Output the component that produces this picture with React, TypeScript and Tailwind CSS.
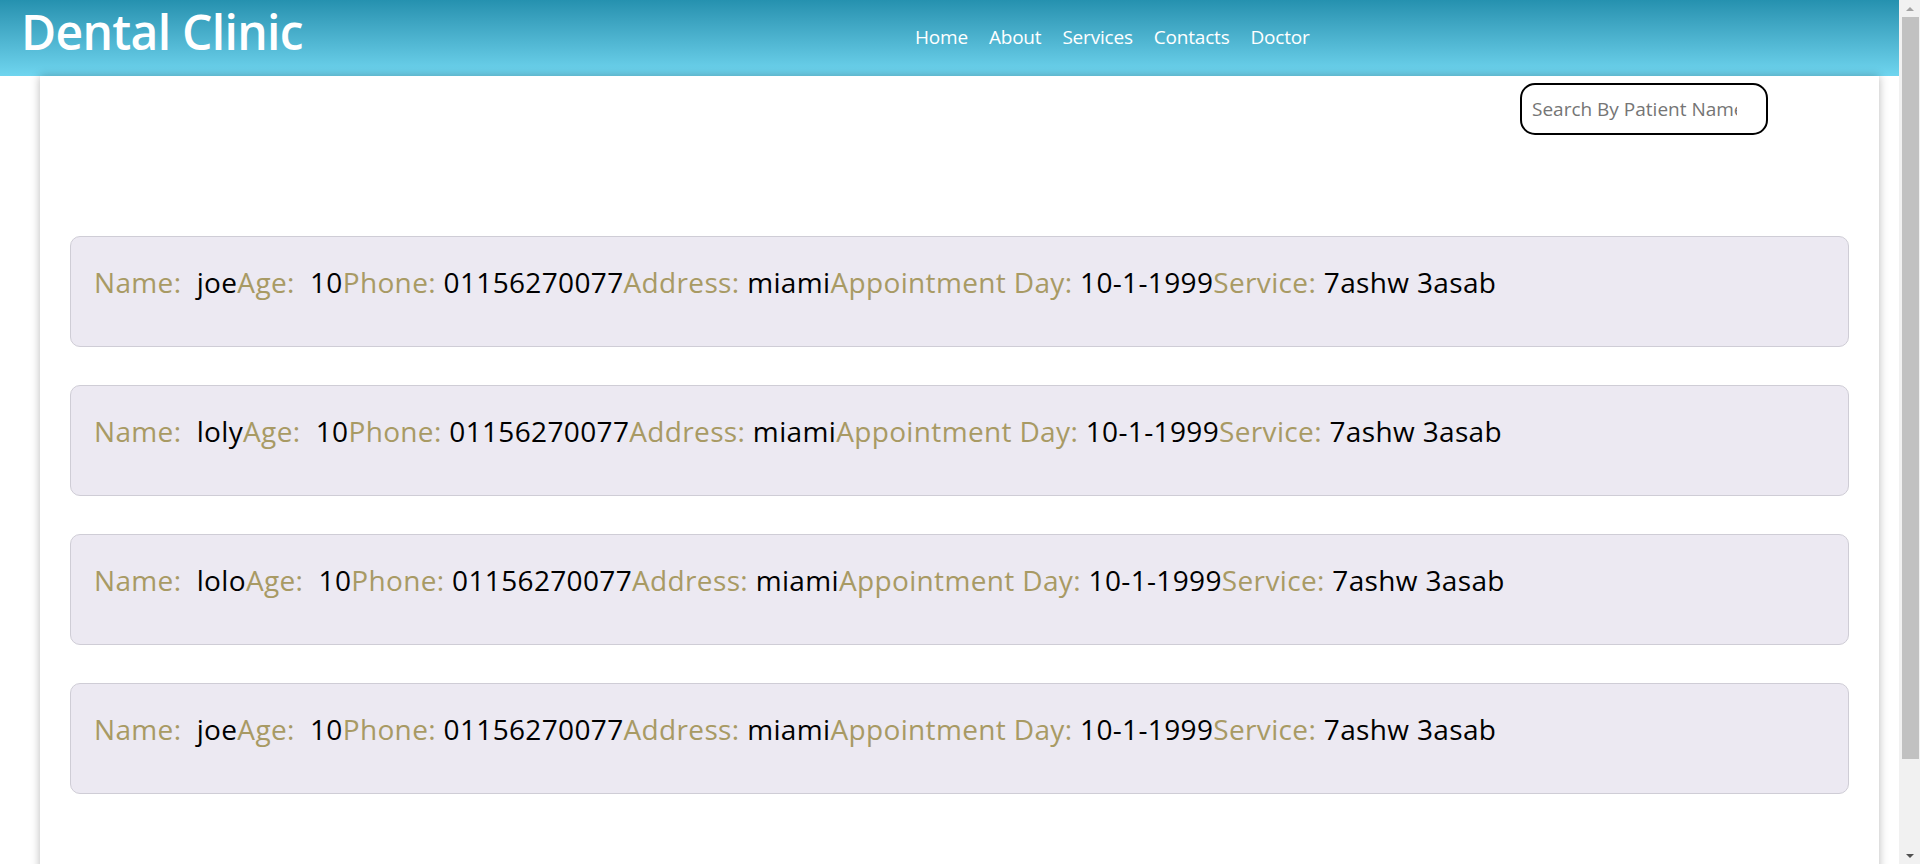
import React from 'react';
import { useState } from 'react';

const patients = [
	{ name: 'joe', age: '10', phone: '01156270077', address: 'miami', day: '10-1-1999', service: '7ashw 3asab' },
	{ name: 'loly', age: '10', phone: '01156270077', address: 'miami', day: '10-1-1999', service: '7ashw 3asab' },
	{ name: 'lolo', age: '10', phone: '01156270077', address: 'miami', day: '10-1-1999', service: '7ashw 3asab' },
	{ name: 'joe', age: '10', phone: '01156270077', address: 'miami', day: '10-1-1999', service: '7ashw 3asab' },
];

const navLinks = ['Home', 'About', 'Services', 'Contacts', 'Doctor'];

const Label = ({ children }: { children: React.ReactNode }) => (
	<span className="text-[#a89a64]">{children}</span>
);

// window scrollbar as seen in the screenshot
const ScrollBar = () => (
	<div className="w-[21px] h-[864px] bg-[#f1f1f1] flex flex-col items-center shrink-0">
		<div className="h-[17px] flex items-center justify-center">
			<div className="w-0 h-0 border-l-[4px] border-r-[4px] border-b-[4px] border-l-transparent border-r-transparent border-b-[#a3a3a3]" />
		</div>
		<div className="w-[17px] h-[742px] ml-[2px] bg-[#c1c1c1]" />
		<div className="flex-1" />
		<div className="h-[17px] flex items-center justify-center">
			<div className="w-0 h-0 border-l-[4px] border-r-[4px] border-t-[4px] border-l-transparent border-r-transparent border-t-[#505050]" />
		</div>
	</div>
);

const App = () => {
	const [search, setSearch] = useState('');

	return (
		<div className="flex h-[864px] overflow-hidden bg-white font-['Open_Sans',sans-serif]">
			<div className="flex-1 min-w-0">
				{/* Header */}
				<header className="h-[76px] bg-gradient-to-b from-[#2591af] to-[#6fd5ef] flex items-start">
					<h1 className="w-[915px] shrink-0 pl-[21px] text-[48px] font-semibold text-white tracking-[-0.7px] leading-[64px]">
						Dental Clinic
					</h1>
					<nav className="mt-[25px] flex gap-[21px] text-[19px] text-white tracking-[-0.2px]">
						{navLinks.map((link) => (
							<a key={link} href="#" className="leading-[24px]">
								{link}
							</a>
						))}
					</nav>
				</header>

				{/* Main panel */}
				<main className="ml-[40px] w-[1839px] h-[890px] bg-white shadow-[0_0_9px_rgba(0,0,0,0.28)] px-[30px] pt-[7px]">
					<div className="flex justify-end pr-[81px]">
						<input
							value={search}
							onChange={(e) => setSearch(e.target.value)}
							placeholder="Search By Patient Name"
							className="w-[248px] h-[52px] border-2 border-black rounded-[15px] pl-[10px] pr-[29px] text-[19px] text-black placeholder:text-[#757575] outline-none"
						/>
					</div>

					<div className="mt-[101px] flex flex-col gap-[38px]">
						{patients
							.filter((p) => p.name.includes(search))
							.map((p, i) => (
								<div
									key={i}
									className="h-[111px] rounded-[10px] border border-[#cfcdd6] bg-[#ece9f2] pl-[23px] pt-[26px] text-[28px] leading-[38px] tracking-[0.35px] text-black"
								>
									<Label>Name:&nbsp; </Label>
									{p.name}
									<Label>Age:&nbsp; </Label>
									{p.age}
									<Label>Phone: </Label>
									{p.phone}
									<Label>Address: </Label>
									{p.address}
									<Label>Appointment Day: </Label>
									{p.day}
									<Label>Service: </Label>
									{p.service}
								</div>
							))}
					</div>
				</main>
			</div>
			<ScrollBar />
		</div>
	);
};

export default App;
